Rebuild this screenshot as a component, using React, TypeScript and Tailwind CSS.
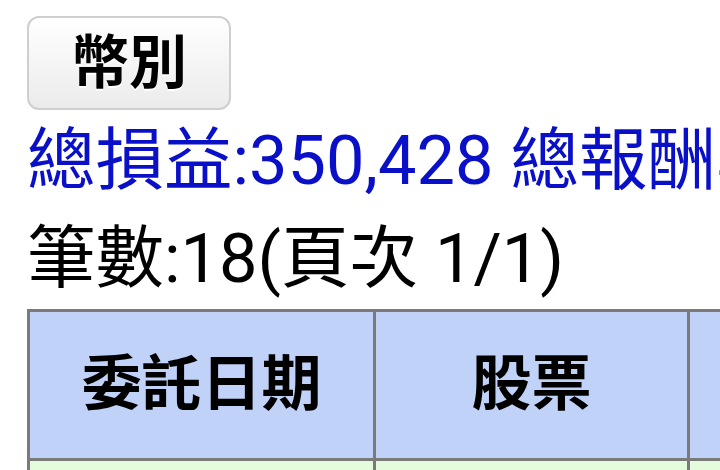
const App = () => {
  return (
    <div
      className="w-[720px] h-[470px] overflow-hidden bg-white pl-[27px] pt-[16px] text-black"
      style={{ fontFamily: 'Roboto, "Noto Sans CJK TC", sans-serif' }}
    >
      <button className="block h-[94px] w-[204px] rounded-[12px] border-2 border-[#cfcfcf] bg-gradient-to-b from-white to-[#ebebeb] text-[58px] font-bold leading-none [text-shadow:0_2px_0_#ffffff]">
        幣別
      </button>
      <p className="mt-[2px] whitespace-nowrap text-[68.5px] leading-[98px] text-[#0a10c8]">
        總損益:350,428 總報酬率
      </p>
      <p className="whitespace-nowrap text-[68.5px] leading-[98px]">筆數:18(頁次 1/1)</p>
      <table className="mt-[1px] w-[960px] table-fixed border-collapse border-[3px] border-[#858585]">
        <thead>
          <tr className="h-[149px] bg-[#c0d2f8]">
            <th className="w-[346px] whitespace-nowrap border-[3px] border-[#7a7a7a] text-[60px] font-bold">委託日期</th>
            <th className="w-[314px] whitespace-nowrap border-[3px] border-[#7a7a7a] text-[60px] font-bold">股票</th>
            <th className="w-[300px] whitespace-nowrap border-[3px] border-[#7a7a7a] text-[60px] font-bold">成交價</th>
          </tr>
        </thead>
        <tbody>
          <tr className="h-[120px] bg-[#e4fcdc]">
            <td className="border-[3px] border-[#7a7a7a]"></td>
            <td className="border-[3px] border-[#7a7a7a]"></td>
            <td className="border-[3px] border-[#7a7a7a]"></td>
          </tr>
        </tbody>
      </table>
    </div>
  )
}

export default App
